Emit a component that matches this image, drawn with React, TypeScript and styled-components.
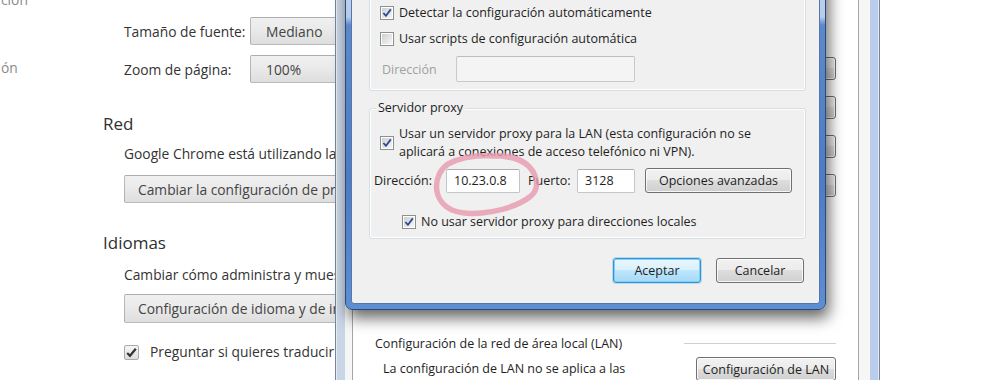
import React from "react";
import styled, { createGlobalStyle } from "styled-components";

const GlobalStyle = createGlobalStyle`
  html, body {
    margin: 0;
    padding: 0;
    background: #fff;
  }
  body {
    overflow: hidden;
  }
`;

const Page = styled.div`
  position: relative;
  width: 999px;
  height: 380px;
  overflow: hidden;
  background: #fff;
  font-family: "Open Sans", "Noto Sans", sans-serif;
`;

/* ---------- chrome settings page ---------- */

const Settings = styled.div`
  display: flex;
  margin-top: -17px;
  color: #333;
  font-size: 13.8px;
`;

const Nav = styled.nav`
  width: 103px;
  flex: none;
  display: flex;
  flex-direction: column;
  color: #8a8a8a;
`;

const NavItem = styled.div<{ $mt: number }>`
  margin-top: ${(p) => p.$mt}px;
  line-height: 20px;
  padding-left: 1px;
`;

const Main = styled.main`
  flex: 1;
  display: flex;
  flex-direction: column;
  white-space: nowrap;
`;

const SectionTitle = styled.h3<{ $mt?: number }>`
  margin: ${(p) => p.$mt ?? 0}px 0 0;
  font-size: 17px;
  font-weight: 400;
  line-height: 22px;
  color: #303030;
`;

const SectionBody = styled.div`
  display: flex;
  flex-direction: column;
  padding-left: 21px;
`;

const FieldRow = styled.div<{ $mt?: number }>`
  display: flex;
  align-items: center;
  margin-top: ${(p) => p.$mt ?? 0}px;
  height: 28px;
`;

const FieldLabel = styled.span`
  width: 126px;
  flex: none;
`;

const Select = styled.div`
  width: 150px;
  height: 28px;
  box-sizing: border-box;
  padding-left: 15px;
  display: flex;
  align-items: center;
  border: 1px solid rgba(0, 0, 0, 0.22);
  border-radius: 2px;
  background: linear-gradient(#f0f0f0, #ebebeb 40%, #dedede);
  color: #444;
`;

const Note = styled.div<{ $mt?: number }>`
  margin-top: ${(p) => p.$mt ?? 0}px;
  line-height: 20px;
`;

const ChromeButton = styled.div<{ $mt?: number; $h?: number }>`
  margin-top: ${(p) => p.$mt ?? 0}px;
  align-self: flex-start;
  height: ${(p) => p.$h ?? 28}px;
  box-sizing: border-box;
  padding: 0 13px;
  display: flex;
  align-items: center;
  border: 1px solid rgba(0, 0, 0, 0.22);
  border-radius: 2px;
  background: linear-gradient(#f0f0f0, #ebebeb 40%, #dedede);
  color: #444;
`;

const CheckRow = styled.label<{ $mt?: number }>`
  margin-top: ${(p) => p.$mt ?? 0}px;
  display: flex;
  align-items: center;
  gap: 11px;
  line-height: 20px;
`;

const ChromeBox = styled.span`
  width: 15px;
  height: 15px;
  box-sizing: border-box;
  flex: none;
  display: flex;
  align-items: center;
  justify-content: center;
  border: 1px solid #aaa;
  border-radius: 2px;
  background: linear-gradient(#f6f6f6, #dedede);
`;

/* ---------- windows 7 dialogs ---------- */

const BackWindow = styled.div`
  position: absolute;
  left: 335px;
  top: -40px;
  width: 545px;
  height: 460px;
  box-sizing: border-box;
  padding: 9px;
  display: flex;
  border: 1px solid #76859a;
  border-radius: 6px;
  background: linear-gradient(90deg, #c9d6e6, #bccfe9 50%, #b9cdec);
  box-shadow: inset 0 0 0 1px rgba(255, 255, 255, 0.55);
  z-index: 1;
  font-size: 12.5px;
  color: #1e1e1e;
`;

const BackBody = styled.div`
  flex: 1;
  display: flex;
  padding: 8px 11px 0 7px;
  background: #f6f6f6;
`;

const TabPanel = styled.div`
  flex: 1;
  display: flex;
  flex-direction: column;
  padding: 0 22px 0 22px;
  background: #fff;
  border: 1px solid #a5a5a5;
`;

const Rule = styled.div<{ $mt?: number; $w?: number }>`
  margin-top: ${(p) => p.$mt ?? 0}px;
  height: 1px;
  background: #cfcfcf;
  width: ${(p) => (p.$w ? `${p.$w}px` : "auto")};
  margin-left: auto;
`;

const SideButtons = styled.div<{ $mt: number }>`
  margin-top: ${(p) => p.$mt}px;
  align-self: flex-end;
  display: flex;
  flex-direction: column;
  gap: 16px;
`;

const WinButton = styled.div<{ $w: number; $h?: number; $default?: boolean }>`
  width: ${(p) => p.$w}px;
  height: ${(p) => p.$h ?? 25}px;
  box-sizing: border-box;
  flex: none;
  display: flex;
  align-items: center;
  justify-content: center;
  border: 1px solid ${(p) => (p.$default ? "#3c8fc4" : "#707070")};
  border-radius: 3px;
  background: ${(p) =>
    p.$default
      ? "linear-gradient(#eaf6fd, #d9f0fc 50%, #bee6fd 50%, #a7d9f5)"
      : "linear-gradient(#f2f2f2, #ebebeb 50%, #dddddd 50%, #cfcfcf)"};
  box-shadow: ${(p) =>
    p.$default
      ? "inset 0 0 0 1px #7fd0fa, 0 0 0 1px rgba(100, 200, 245, 0.45)"
      : "inset 0 0 0 1px rgba(255, 255, 255, 0.8)"};
  color: #1e1e1e;
  white-space: nowrap;
`;

const LanHeader = styled.div<{ $mt: number }>`
  margin-top: ${(p) => p.$mt}px;
  display: flex;
  align-items: center;
  height: 18px;
`;

const LanRow = styled.div`
  margin-top: 5px;
  display: flex;
  justify-content: space-between;
  align-items: flex-start;
`;

const LanText = styled.div`
  margin: 3px 0 0 8px;
  line-height: 18px;
`;

const FrontWindow = styled.div`
  position: absolute;
  left: 345px;
  top: -40px;
  width: 481px;
  height: 350px;
  box-sizing: border-box;
  padding: 5px;
  display: flex;
  border: 1px solid #2d4a78;
  border-radius: 0 0 7px 7px;
  background: linear-gradient(
    180deg,
    #c6d8ef 0px,
    #b5cbe9 56px,
    #5c89cc 64px,
    #4d7cc3 220px,
    #5d8ed3 100%
  );
  box-shadow: 3px 8px 15px rgba(0, 0, 0, 0.6);
  z-index: 2;
  font-size: 12.5px;
  color: #1e1e1e;
`;

const DialogBody = styled.div`
  flex: 1;
  display: flex;
  flex-direction: column;
  padding: 0 13px 0 17px;
  background: #f0f0f0;
  border: 1px solid #5577aa;
  border-radius: 0 0 3px 3px;
`;

const GroupBox = styled.div<{ $mt: number; $pt: number; $pb: number }>`
  position: relative;
  margin-top: ${(p) => p.$mt}px;
  padding: ${(p) => p.$pt}px 10px ${(p) => p.$pb}px 10px;
  display: flex;
  flex-direction: column;
  border: 1px solid #d5dfe5;
  border-radius: 3px;
  box-shadow: inset 0 0 0 1px #fff;
`;

const GroupLabel = styled.span`
  position: absolute;
  top: -9px;
  left: 6px;
  padding: 0 2px;
  line-height: 16px;
  background: #f0f0f0;
`;

const WinCheckRow = styled.div<{ $mt?: number; $ml?: number }>`
  margin: ${(p) => p.$mt ?? 0}px 0 0 ${(p) => p.$ml ?? 0}px;
  display: flex;
  align-items: center;
  gap: 5px;
  line-height: 18px;
  white-space: nowrap;
`;

const WinBox = styled.span`
  width: 14px;
  height: 14px;
  box-sizing: border-box;
  flex: none;
  display: flex;
  align-items: center;
  justify-content: center;
  border: 1px solid #8e8f8f;
  background: #fff;
`;

const WinBoxInner = styled.span`
  width: 10px;
  height: 10px;
  display: flex;
  align-items: center;
  justify-content: center;
  background: linear-gradient(135deg, #cfcfcf, #f6f6f6);
`;

const InputRow = styled.div<{ $mt?: number; $ml?: number; $h: number }>`
  margin: ${(p) => p.$mt ?? 0}px 0 0 ${(p) => p.$ml ?? 0}px;
  height: ${(p) => p.$h}px;
  display: flex;
  align-items: center;
`;

const InputLabel = styled.span<{ $w: number; $disabled?: boolean }>`
  width: ${(p) => p.$w}px;
  flex: none;
  color: ${(p) => (p.$disabled ? "#a0a0a0" : "#1e1e1e")};
`;

const TextBox = styled.div<{ $w: number; $h: number; $disabled?: boolean }>`
  width: ${(p) => p.$w}px;
  height: ${(p) => p.$h}px;
  box-sizing: border-box;
  flex: none;
  display: flex;
  align-items: center;
  padding-left: 7px;
  border: 1px solid ${(p) => (p.$disabled ? "#c9c9c9" : "#c2c6cc")};
  border-top-color: ${(p) => (p.$disabled ? "#bdbdbd" : "#abadb3")};
  border-radius: 2px;
  background: ${(p) => (p.$disabled ? "#f4f4f4" : "#fff")};
`;

const Spacer = styled.span<{ $w: number }>`
  width: ${(p) => p.$w}px;
  flex: none;
`;

const DialogButtons = styled.div`
  margin-top: 19px;
  padding-right: 2px;
  display: flex;
  justify-content: flex-end;
  gap: 15px;
`;

const Circle = styled.svg`
  position: absolute;
  left: 430px;
  top: 150px;
  z-index: 3;
  pointer-events: none;
`;

function WinCheck({ checked }: { checked?: boolean }) {
  return (
    <WinBox>
      <WinBoxInner>
        {checked && (
          <svg width="10" height="10" viewBox="0 0 10 10">
            <path
              d="M1.4 5 L4 7.8 L8.8 1.4"
              fill="none"
              stroke="#2b4a92"
              strokeWidth="1.8"
              strokeLinejoin="round"
            />
          </svg>
        )}
      </WinBoxInner>
    </WinBox>
  );
}

function ChromeCheck() {
  return (
    <ChromeBox>
      <svg width="13" height="13" viewBox="0 0 13 13">
        <path
          d="M2.2 7 L5 9.8 L10.8 2.8"
          fill="none"
          stroke="#333"
          strokeWidth="2.2"
        />
      </svg>
    </ChromeBox>
  );
}

export default function App() {
  return (
    <Page>
      <GlobalStyle />

      <Settings>
        <Nav>
          <NavItem $mt={7}>ción</NavItem>
          <NavItem $mt={48}>ón</NavItem>
        </Nav>
        <Main>
          <SectionTitle>Contenido web</SectionTitle>
          <SectionBody>
            <FieldRow $mt={12}>
              <FieldLabel>Tamaño de fuente:</FieldLabel>
              <Select>Mediano</Select>
            </FieldRow>
            <FieldRow $mt={10}>
              <FieldLabel>Zoom de página:</FieldLabel>
              <Select>100%</Select>
            </FieldRow>
          </SectionBody>

          <SectionTitle $mt={30}>Red</SectionTitle>
          <SectionBody>
            <Note $mt={9}>
              Google Chrome está utilizando la configuración de proxy del
              sistema del ordenador para conectarse a la red.
            </Note>
            <ChromeButton $mt={11}>
              Cambiar la configuración de proxy...
            </ChromeButton>
          </SectionBody>

          <SectionTitle $mt={29}>Idiomas</SectionTitle>
          <SectionBody>
            <Note $mt={11}>
              Cambiar cómo administra y muestra los idiomas Google Chrome
            </Note>
            <ChromeButton $mt={9} $h={29}>
              Configuración de idioma y de introducción de texto...
            </ChromeButton>
            <CheckRow $mt={19}>
              <ChromeCheck />
              Preguntar si quieres traducir páginas que no están en un idioma
              que puedas leer
            </CheckRow>
          </SectionBody>
        </Main>
      </Settings>

      <BackWindow>
        <BackBody>
          <TabPanel>
            <Rule $mt={54} />
            <SideButtons $mt={23}>
              <WinButton $w={140} $h={23}>Agregar...</WinButton>
              <WinButton $w={140} $h={23}>Agregar VPN...</WinButton>
              <WinButton $w={140} $h={23}>Quitar...</WinButton>
              <WinButton $w={140} $h={23}>Configuración</WinButton>
            </SideButtons>
            <LanHeader $mt={137}>
              Configuración de la red de área local (LAN)
              <Rule $w={152} />
            </LanHeader>
            <LanRow>
              <LanText>
                La configuración de LAN no se aplica a las
                <br />
                conexiones de acceso telefónico. Elija Configuración
              </LanText>
              <WinButton $w={140} $h={24}>
                Configuración de LAN
              </WinButton>
            </LanRow>
          </TabPanel>
        </BackBody>
      </BackWindow>

      <FrontWindow>
        <DialogBody>
          <GroupBox $mt={15} $pt={21} $pb={8}>
            <GroupLabel>Configuración automática</GroupLabel>
            <WinCheckRow>
              <WinCheck checked />
              Detectar la configuración automáticamente
            </WinCheckRow>
            <WinCheckRow $mt={8}>
              <WinCheck />
              Usar scripts de configuración automática
            </WinCheckRow>
            <InputRow $mt={8} $h={26} $ml={2}>
              <InputLabel $w={74} $disabled>
                Dirección
              </InputLabel>
              <TextBox $w={179} $h={26} $disabled />
            </InputRow>
          </GroupBox>

          <GroupBox $mt={17} $pt={16} $pb={7}>
            <GroupLabel>Servidor proxy</GroupLabel>
            <WinCheckRow>
              <WinCheck checked />
              <span>
                Usar un servidor proxy para la LAN (esta configuración no se
                <br />
                aplicará a conexiones de acceso telefónico ni VPN).
              </span>
            </WinCheckRow>
            <InputRow $mt={6} $ml={-6} $h={27}>
              <InputLabel $w={72}>Dirección:</InputLabel>
              <TextBox $w={74} $h={24}>
                10.23.0.8
              </TextBox>
              <Spacer $w={8} />
              <InputLabel $w={49}>Puerto:</InputLabel>
              <TextBox $w={58} $h={24}>
                3128
              </TextBox>
              <Spacer $w={10} />
              <WinButton $w={147}>Opciones avanzadas</WinButton>
            </InputRow>
            <WinCheckRow $mt={19} $ml={22}>
              <WinCheck checked />
              No usar servidor proxy para direcciones locales
            </WinCheckRow>
          </GroupBox>

          <DialogButtons>
            <WinButton $w={88} $default>
              Aceptar
            </WinButton>
            <WinButton $w={88}>Cancelar</WinButton>
          </DialogButtons>
        </DialogBody>
      </FrontWindow>

      <Circle width="112" height="70" viewBox="0 0 112 70">
        <path
          d="M97 15 C84 3, 40 2, 18 14 C3 24, 1 50, 22 60 C42 68, 82 61, 101 46 C110 38, 108 23, 95 13 C87 7, 74 5, 60 6"
          fill="none"
          stroke="#e79aae"
          strokeOpacity="0.8"
          strokeWidth="5.5"
          strokeLinecap="round"
        />
      </Circle>
    </Page>
  );
}
